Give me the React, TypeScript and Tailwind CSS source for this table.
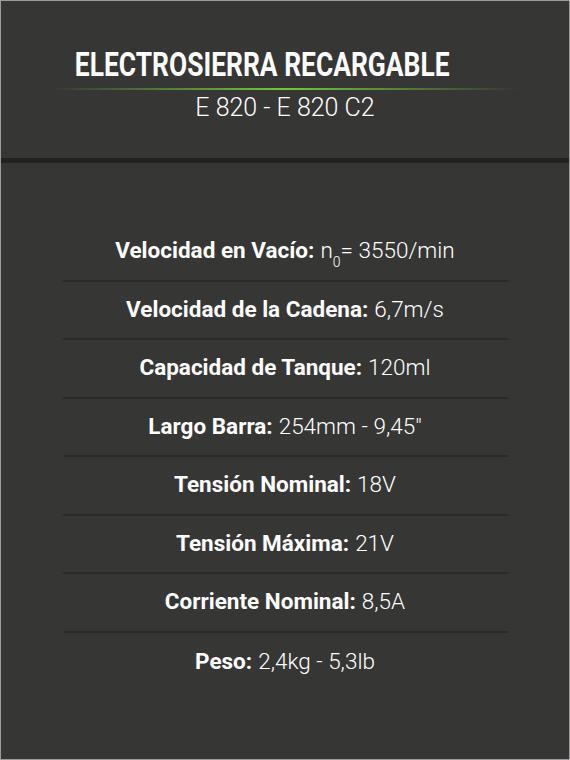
const specs = [
  { label: "Velocidad en Vacío:", value: "n0" },
  { label: "Velocidad de la Cadena:", value: "6,7m/s" },
  { label: "Capacidad de Tanque:", value: "120ml" },
  { label: "Largo Barra:", value: "254mm - 9,45\"" },
  { label: "Tensión Nominal:", value: "18V" },
  { label: "Tensión Máxima:", value: "21V" },
  { label: "Corriente Nominal:", value: "8,5A" },
  { label: "Peso:", value: "2,4kg - 5,3lb" },
];

export default function App() {
  return (
    <div className="w-[570px] h-[760px] bg-[#363634] border border-[#9c9c9c] flex flex-col text-white font-['Roboto','Liberation_Sans',sans-serif]">
      {/* header */}
      <div className="h-[157px] flex flex-col items-center pt-[44px]">
        <h1 className="text-[33px] leading-[40px] font-bold scale-x-[0.8] whitespace-nowrap mr-[46px]">
          ELECTROSIERRA RECARGABLE
        </h1>
        <div className="w-[470px] h-[2px] mt-[3px] bg-gradient-to-r from-transparent via-[#72c83c] to-transparent" />
        <div className="text-[25px] leading-[30px] font-light font-['Roboto_Light','Roboto',sans-serif] mt-[3px]">
          E 820 - E 820 C2
        </div>
      </div>
      <div className="h-[5px] bg-[#222221]" />

      {/* specs */}
      <div className="flex flex-col items-center pt-[60px]">
        {specs.map((s, i) => (
          <div
            key={s.label}
            className={
              "w-[445px] h-[58.5px] flex items-center justify-center text-[22.5px] " +
              (i < specs.length - 1 ? "border-b-2 border-[#2a2a29]" : "")
            }
          >
            <span className="font-bold">{s.label}</span>
            <span className="font-light font-['Roboto_Light','Roboto',sans-serif] ml-[6px]">
              {s.value === "n0" ? (
                <>
                  n<sub className="text-[14px] align-[-5px]">0</sub>= 3550/min
                </>
              ) : (
                s.value
              )}
            </span>
          </div>
        ))}
      </div>
    </div>
  );
}
